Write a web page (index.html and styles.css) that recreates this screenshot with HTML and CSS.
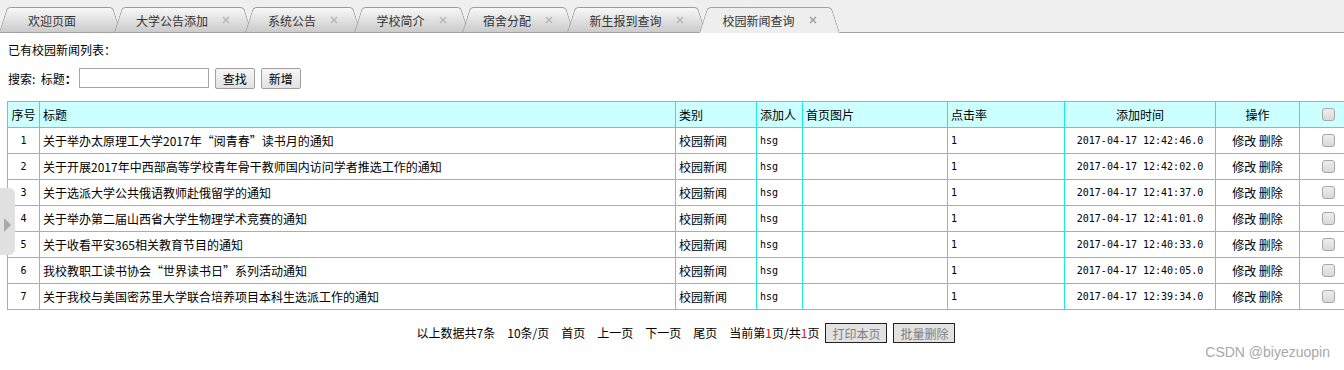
FILE: index.html
```html
<!DOCTYPE html>
<html lang="zh-CN">
<head>
    <meta charset="UTF-8">
    <title>校园新闻查询</title>
    <link rel="stylesheet" href="styles.css">
</head>
<body>
    <div class="tabbar">
        <div class="tab t1"><span>欢迎页面</span></div>
        <div class="tab t2"><span>大学公告添加</span><svg class="close" width="8" height="8" viewBox="0 0 8 8"><path d="M1 1L7 7M7 1L1 7"/></svg></div>
        <div class="tab t3"><span>系统公告</span><svg class="close" width="8" height="8" viewBox="0 0 8 8"><path d="M1 1L7 7M7 1L1 7"/></svg></div>
        <div class="tab t4"><span>学校简介</span><svg class="close" width="8" height="8" viewBox="0 0 8 8"><path d="M1 1L7 7M7 1L1 7"/></svg></div>
        <div class="tab t5"><span>宿舍分配</span><svg class="close" width="8" height="8" viewBox="0 0 8 8"><path d="M1 1L7 7M7 1L1 7"/></svg></div>
        <div class="tab t6"><span>新生报到查询</span><svg class="close" width="8" height="8" viewBox="0 0 8 8"><path d="M1 1L7 7M7 1L1 7"/></svg></div>
        <div class="tab t7 active"><span>校园新闻查询</span><svg class="close" width="8" height="8" viewBox="0 0 8 8"><path d="M1 1L7 7M7 1L1 7"/></svg></div>
    </div>

    <div class="content">
        <div class="caption">已有校园新闻列表：</div>
        <form class="search">
            <span>搜索:&nbsp; 标题<b>：</b></span>
            <input type="text" class="field">
            <button type="button" class="btn">查找</button>
            <button type="button" class="btn">新增</button>
        </form>

        <table class="list">
            <colgroup>
                <col style="width:32px">
                <col style="width:636px">
                <col style="width:81px">
                <col style="width:46px">
                <col style="width:145px">
                <col style="width:117px">
                <col style="width:151px">
                <col style="width:84px">
                <col style="width:58px">
            </colgroup>
            <tr class="head">
                <td class="c">序号</td>
                <td>标题</td>
                <td>类别</td>
                <td>添加人</td>
                <td>首页图片</td>
                <td>点击率</td>
                <td class="c">添加时间</td>
                <td class="c">操作</td>
                <td class="c"><input type="checkbox" class="chk"></td>
            </tr>
            <tr>
                <td class="c mono">1</td>
                <td>关于举办太原理工大学2017年“阅青春”读书月的通知</td>
                <td>校园新闻</td>
                <td class="mono">hsg</td>
                <td></td>
                <td class="mono">1</td>
                <td class="c mono">2017-04-17 12:42:46.0</td>
                <td class="c">修改 删除</td>
                <td class="c"><input type="checkbox" class="chk"></td>
            </tr>
            <tr>
                <td class="c mono">2</td>
                <td>关于开展2017年中西部高等学校青年骨干教师国内访问学者推选工作的通知</td>
                <td>校园新闻</td>
                <td class="mono">hsg</td>
                <td></td>
                <td class="mono">1</td>
                <td class="c mono">2017-04-17 12:42:02.0</td>
                <td class="c">修改 删除</td>
                <td class="c"><input type="checkbox" class="chk"></td>
            </tr>
            <tr>
                <td class="c mono">3</td>
                <td>关于选派大学公共俄语教师赴俄留学的通知</td>
                <td>校园新闻</td>
                <td class="mono">hsg</td>
                <td></td>
                <td class="mono">1</td>
                <td class="c mono">2017-04-17 12:41:37.0</td>
                <td class="c">修改 删除</td>
                <td class="c"><input type="checkbox" class="chk"></td>
            </tr>
            <tr>
                <td class="c mono">4</td>
                <td>关于举办第二届山西省大学生物理学术竞赛的通知</td>
                <td>校园新闻</td>
                <td class="mono">hsg</td>
                <td></td>
                <td class="mono">1</td>
                <td class="c mono">2017-04-17 12:41:01.0</td>
                <td class="c">修改 删除</td>
                <td class="c"><input type="checkbox" class="chk"></td>
            </tr>
            <tr>
                <td class="c mono">5</td>
                <td>关于收看平安365相关教育节目的通知</td>
                <td>校园新闻</td>
                <td class="mono">hsg</td>
                <td></td>
                <td class="mono">1</td>
                <td class="c mono">2017-04-17 12:40:33.0</td>
                <td class="c">修改 删除</td>
                <td class="c"><input type="checkbox" class="chk"></td>
            </tr>
            <tr>
                <td class="c mono">6</td>
                <td>我校教职工读书协会“世界读书日”系列活动通知</td>
                <td>校园新闻</td>
                <td class="mono">hsg</td>
                <td></td>
                <td class="mono">1</td>
                <td class="c mono">2017-04-17 12:40:05.0</td>
                <td class="c">修改 删除</td>
                <td class="c"><input type="checkbox" class="chk"></td>
            </tr>
            <tr>
                <td class="c mono">7</td>
                <td>关于我校与美国密苏里大学联合培养项目本科生选派工作的通知</td>
                <td>校园新闻</td>
                <td class="mono">hsg</td>
                <td></td>
                <td class="mono">1</td>
                <td class="c mono">2017-04-17 12:39:34.0</td>
                <td class="c">修改 删除</td>
                <td class="c"><input type="checkbox" class="chk"></td>
            </tr>
        </table>

        <div class="pager">
            <span>以上数据共7条</span>
            <span>10条/页</span>
            <span>首页</span>
            <span>上一页</span>
            <span>下一页</span>
            <span>尾页</span>
            <span>当前第<em>1</em>页/共<em>1</em>页</span>
            <button type="button" class="pbtn" disabled>打印本页</button>
            <button type="button" class="pbtn" disabled>批量删除</button>
        </div>
    </div>

    <div class="toggle"><i></i></div>
    <div class="mark">CSDN @biyezuopin</div>
</body>
</html>
```

FILE: styles.css
```css
html, body {
    overflow: hidden;
}
body {
    margin: 0;
    padding: 0;
    font-family: "Noto Sans CJK SC", "Liberation Sans", sans-serif;
    font-size: 12px;
    color: #000;
    background: #fff;
    position: relative;
    height: 370px;
}

/* tabs */
.tabbar {
    display: flex;
    align-items: flex-end;
    height: 25px;
    padding-top: 7px;
    background: #efefef;
    border-bottom: 1px solid #a3a3a3;
}
.tab {
    position: relative;
    z-index: 1;
    height: 25px;
    margin-left: -7px;
    display: flex;
    align-items: center;
    justify-content: center;
    gap: 14px;
    color: #333;
    box-sizing: border-box;
    padding-top: 1px;
}
.tab::before,
.tab::after {
    content: "";
    position: absolute;
    z-index: -1;
    top: 0;
    bottom: 0;
    width: 60%;
    box-sizing: border-box;
    border: 1px solid #9c9c9c;
    border-bottom: none;
    background: linear-gradient(#f8f8f8, #d6d6d6 75%, #cbcbcb);
    transform-origin: bottom;
}
.tab::before {
    left: 0;
    border-right: none;
    border-radius: 4px 0 0 0;
    transform: skewX(-18deg);
}
.tab::after {
    right: 0;
    border-left: none;
    border-radius: 0 4px 0 0;
    transform: skewX(18deg);
}
.tab .close {
    stroke: #b4b4b4;
    stroke-width: 1.3;
    fill: none;
}
.tab.active {
    z-index: 2;
    height: 26px;
    margin-bottom: -1px;
    padding-bottom: 1px;
}
.tab.active::before,
.tab.active::after {
    background: #eeeeee;
    border-color: #a3a3a3;
}
.tab.active .close {
    stroke: #999;
}
.t1 { width: 122px; margin-left: -1px; justify-content: flex-start; padding-left: 29px; }
.t2 { width: 138px; }
.t3 { width: 116px; }
.t4 { width: 115px; }
.t5 { width: 112px; }
.t6 { width: 139px; }
.t7 { width: 141px; }

/* page content */
.caption {
    padding-left: 8px;
    margin-top: 9px;
    line-height: 16px;
}
.search {
    display: flex;
    align-items: center;
    padding-left: 8px;
    margin: 10px 0 0;
    height: 20px;
}
.search b {
    font-weight: bold;
}
.field {
    width: 130px;
    height: 20px;
    box-sizing: border-box;
    margin: 0 6px 0 2px;
    border: 1px solid #a6a6a6;
    padding: 0 2px;
    font-size: 12px;
}
.btn {
    height: 21px;
    width: 40px;
    margin: 0 6px 0 0;
    padding: 0;
    font-family: "Noto Sans CJK SC", sans-serif;
    font-size: 12px;
    color: #000;
    background: linear-gradient(#f6f6f6, #e2e2e2);
    border: 1px solid #a0a0a0;
    border-radius: 2px;
}

/* table */
.list {
    width: 1350px;
    margin: 13px 0 0 7px;
    table-layout: fixed;
    border-collapse: collapse;
}
.list td {
    height: 25px;
    padding: 0 3px;
    border: 1px solid #1ee8e8;
    white-space: nowrap;
    overflow: hidden;
    text-align: left;
    vertical-align: middle;
    line-height: 16px;
}
.list .head td {
    background: #ccffff;
}
.list td.c {
    text-align: center;
}
.list td.mono {
    font-family: "DejaVu Sans Mono", "Liberation Mono", monospace;
    font-size: 10px;
}
.chk {
    appearance: none;
    -webkit-appearance: none;
    display: block;
    margin: 0 auto;
    width: 13px;
    height: 13px;
    border: 1px solid #a7a7a7;
    border-radius: 3px;
    background: linear-gradient(#eeeeee, #d9d9d9);
}

/* pager */
.pager {
    width: 1350px;
    margin: 13px 0 0 11px;
    display: flex;
    justify-content: center;
    align-items: center;
    gap: 12px;
    line-height: 20px;
}
.pager em {
    font-style: normal;
    color: #ff0000;
}
.pbtn {
    height: 20px;
    width: 62px;
    padding: 0;
    margin-left: -6px;
    font-family: "Noto Sans CJK SC", sans-serif;
    font-size: 12px;
    color: #808080;
    background: #e2e2e2;
    border: 1px solid #222;
    border-radius: 0;
}

/* overlays */
.toggle {
    position: absolute;
    left: 0;
    top: 188px;
    width: 15px;
    height: 67px;
    background: #e0e0e0;
    border-radius: 0 6px 6px 0;
}
.toggle i {
    position: absolute;
    left: 4px;
    top: 30px;
    border-left: 7px solid #a9a9a9;
    border-top: 7px solid transparent;
    border-bottom: 7px solid transparent;
}
.mark {
    position: absolute;
    right: 14px;
    top: 344px;
    font-family: "Liberation Sans", sans-serif;
    font-size: 14px;
    color: #a8a8a8;
}
```
